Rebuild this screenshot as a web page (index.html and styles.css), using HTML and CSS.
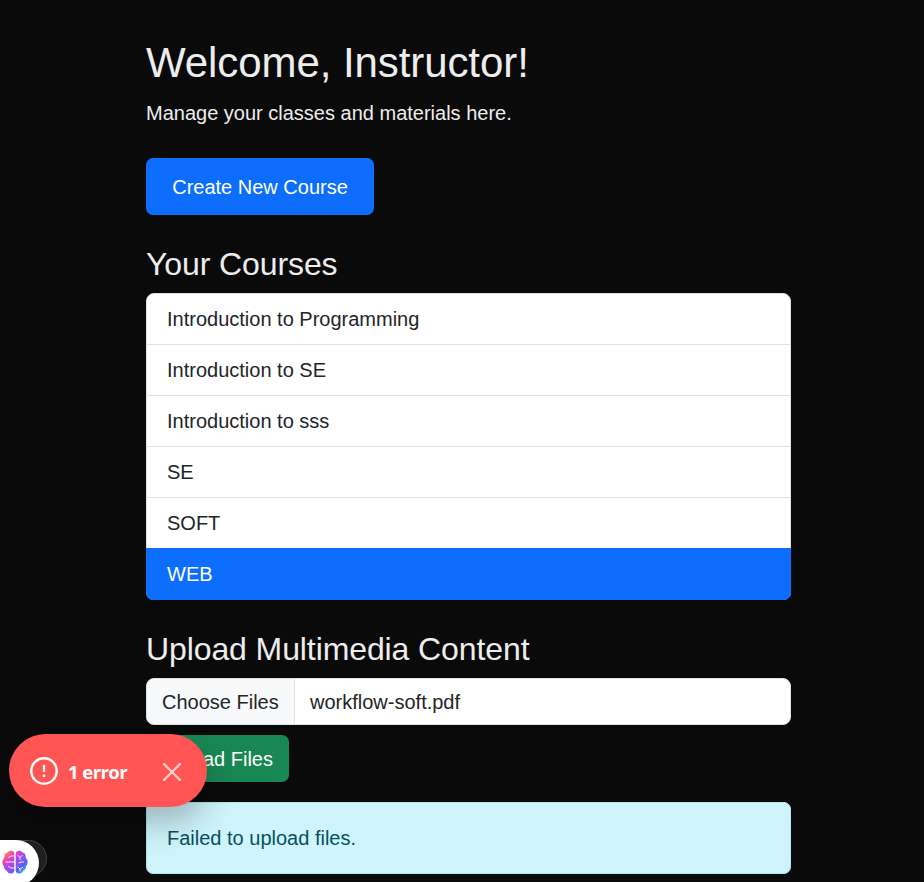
FILE: index.html
```html
<!DOCTYPE html>
<html lang="en">
<head>
<meta charset="utf-8">
<title>Instructor Dashboard</title>
<link rel="stylesheet" href="styles.css">
</head>
<body>
<main class="container">
  <h1>Welcome, Instructor!</h1>
  <p class="lead">Manage your classes and materials here.</p>
  <button class="btn btn-primary">Create New Course</button>
  <h2>Your Courses</h2>
  <ul class="list">
    <li>Introduction to Programming</li>
    <li>Introduction to SE</li>
    <li>Introduction to sss</li>
    <li>SE</li>
    <li>SOFT</li>
    <li class="active">WEB</li>
  </ul>
  <h2 class="upload-title">Upload Multimedia Content</h2>
  <div class="file"><span class="choose">Choose Files</span><span class="name">workflow-soft.pdf</span></div>
  <button class="btn btn-success">Upload Files</button>
  <div class="alert">Failed to upload files.</div>
</main>
<div class="toast">
  <svg class="warn" viewBox="0 0 28 28" width="28" height="28" fill="none" stroke="#fff"><circle cx="14" cy="14" r="12.7" stroke-width="2.4"/><path d="M14 8v7" stroke-width="2.3"/><path d="M14 17.6v2.5" stroke-width="2.5"/></svg>
  <span class="toast-text">1 error</span>
  <svg class="close" viewBox="0 0 20 20" width="20" height="20" fill="none" stroke="#fff" stroke-width="2.4" stroke-linecap="round"><path d="M2 2l16 16M18 2L2 18"/></svg>
</div>
<div class="dock-back"></div>
<div class="dock">
  <svg viewBox="0 0 26 24" width="26" height="24">
    <defs><linearGradient id="g" x1="0" y1="0" x2="1" y2="1"><stop offset="0" stop-color="#ff9a20"/><stop offset=".12" stop-color="#ff8a3c"/><stop offset=".28" stop-color="#ee3fc0"/><stop offset=".52" stop-color="#9b4df0"/><stop offset=".74" stop-color="#5b5ff5"/><stop offset=".9" stop-color="#20b8ff"/></linearGradient></defs>
    <path fill="url(#g)" d="M12.300 3Q11.500 .5 9 .7Q6.500 .5 5.300 2.500Q2.500 3 2.500 6.200Q2 7.500 1.800 8.600Q0 10 .4 12.500Q.3 14.800 2 16Q1.800 19.500 4.500 20.500Q6 23.800 9 23.500Q11.500 23.700 12.300 21ZM13.700 3Q14.500 .5 17 .7Q19.500 .5 20.700 2.500Q23.500 3 23.500 6.200Q24 7.500 24.200 8.600Q26 10 25.600 12.500Q25.700 14.800 24 16Q24.200 19.500 21.500 20.500Q20 23.800 17 23.500Q14.500 23.700 13.700 21Z"/>
    <path fill="none" stroke="#fff" stroke-width=".9" stroke-linecap="round" d="M12.500 6H9L6.500 7.500M12.500 12H4M12.500 18H9L6.500 16.500M16 5.500l2 2v2M18 7.500l2-2M21.500 12h-2.500l-2 1M16 17l2 2v2M18 19l2.500-1.500"/>
  </svg>
</div>
</body>
</html>
```
FILE: styles.css
```css
* { box-sizing: border-box; }
body {
  margin: 0;
  height: 882px;
  overflow: hidden;
  background: #0a0a0a;
  color: #ededed;
  font: 20px/30px "Liberation Sans", Arial, sans-serif;
}
.container { width: 645px; margin-left: 146px; padding-top: 37px; }
h1, h2 { margin: 0; font-weight: 400; white-space: nowrap; }
h1 { font-size: 42px; line-height: 51px; letter-spacing: -.08px; }
h2 { margin-top: 30px; font-size: 32px; line-height: 38px; letter-spacing: -.1px; }
.lead { margin: 10px 0 30px; }
.btn {
  display: block;
  border: 0;
  border-radius: 7px;
  color: #fff;
  font: inherit;
  white-space: nowrap;
}
.btn-primary { width: 228px; height: 57px; padding: 0; background: #0d6efd; }
.list {
  margin: 10px 0 0;
  padding: 0;
  list-style: none;
  border: 1px solid #dee2e6;
  border-radius: 8px;
  background: #fff;
  color: #212529;
}
.list li { height: 51px; padding: 10px 20px; border-bottom: 1px solid #dee2e6; }
.list li:nth-last-child(2) { height: 50px; border-bottom: 0; }
.list .active {
  height: 52px;
  margin: 0 -1px -1px;
  padding: 11px 21px;
  border: 0;
  border-radius: 0 0 7px 7px;
  background: #0d6efd;
  color: #fff;
}
.file {
  display: flex;
  height: 47px;
  margin-top: 10px;
  border: 1px solid #dee2e6;
  border-radius: 8px;
  overflow: hidden;
  background: #fff;
  color: #212529;
  line-height: 46px;
}
.choose { width: 148px; padding-left: 15px; background: #f8f9fa; border-right: 1px solid #dee2e6; white-space: nowrap; }
.name { padding-left: 15px; }
.btn-success { width: 143px; height: 47px; margin-top: 10px; padding: 0 16px 0 0; background: #198754; text-align: right; }
.alert {
  height: 72px;
  margin-top: 20px;
  padding: 20px;
  border: 1px solid #9eeaf9;
  border-radius: 7px;
  background: #cff4fc;
  color: #055160;
}
.toast {
  position: absolute;
  left: 9px;
  top: 734px;
  width: 198px;
  height: 73px;
  display: flex;
  align-items: center;
  padding: 0 25px 0 21px;
  border-radius: 37px;
  background: #ff5555;
  color: #fff;
  box-shadow: 0 16px 32px rgba(0, 0, 0, .25);
}
.toast-text { margin: 3px auto 0 10px; font: 700 18.500px/30px "Open Sans", sans-serif; letter-spacing: -.55px; white-space: nowrap; }
.close { opacity: .7; margin-top: 2px; }
.dock-back, .dock { position: absolute; left: -8px; top: 840px; width: 47px; height: 45px; border-radius: 0 23px 23px 0; }
.dock-back { width: 55px; height: 37px; background: #1e1f20; border: 1px solid #414243; border-radius: 0 19px 19px 0; }
.dock { background: #fff; padding: 10px 0 0 10px; height: 46px; overflow: hidden; }
.dock svg { display: block; }
```
